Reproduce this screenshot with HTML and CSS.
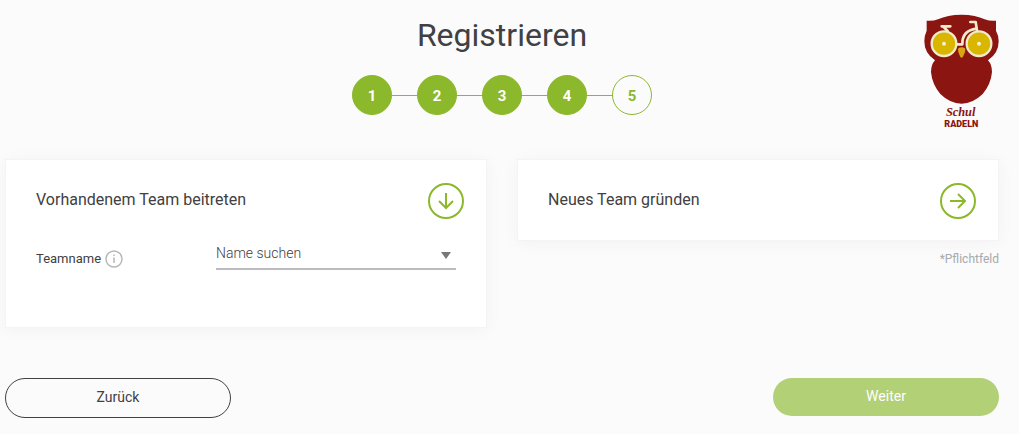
FILE: index.html
```
<!DOCTYPE html>
<html lang="de">
<head>
  <meta charset="UTF-8">
  <meta name="viewport" content="width=device-width, initial-scale=1.0">
  <title>Registrieren</title>
  <link rel="stylesheet" href="styles.css">
</head>
<body>
  <header class="header">
    <div class="intro">
      <h1>Registrieren</h1>
      <ol class="steps">
        <li class="step">1</li>
        <li class="step">2</li>
        <li class="step">3</li>
        <li class="step">4</li>
        <li class="step current" aria-current="step">5</li>
      </ol>
    </div>
    <svg class="logo" viewBox="42 28 225 342" role="img" aria-label="Schulradeln">
      <path fill="#8a1511" d="M50 48 Q68 50 84 44 Q112 30 154 30 Q198 30 224 44 Q240 50 258 48 L258 78 Q266 92 266 110 Q266 146 234 167 Q246 180 246 202 Q243 238 218 268 Q188 297 155 297 Q119 296 91 268 Q66 238 63 202 Q63 180 75 167 Q43 146 43 110 Q43 92 50 78 Z"/>
      <g fill="#d9b600" stroke="#f3eac9" stroke-width="7">
        <circle cx="102" cy="117" r="37"/>
        <circle cx="207" cy="117" r="37"/>
      </g>
      <circle cx="102" cy="117" r="6" fill="#f7efcf"/>
      <circle cx="207" cy="117" r="6" fill="#f7efcf"/>
      <g fill="none" stroke="#f3eac9" stroke-width="8" stroke-linecap="round" stroke-linejoin="round">
        <path d="M95 65 H121 M101 67 L113 79"/>
        <path d="M141 119 H157 Q156 78 199 72"/>
        <path d="M181 52 H197 L201 78"/>
      </g>
      <path fill="#d9a514" d="M146 130 Q155 125 164 130 Q168 136 163 147 Q159 158 155 159 Q150 158 147 147 Q142 136 146 130 Z"/>
      <text class="logo-script" x="152" y="335" text-anchor="middle">Schul</text>
      <text class="logo-name" x="154" y="366" text-anchor="middle">RADELN</text>
    </svg>
  </header>

  <main class="teams">
    <section class="card join">
      <div class="card-head">
        <h2>Vorhandenem Team beitreten</h2>
        <button class="toggle" type="button" aria-label="Vorhandenem Team beitreten">
          <svg viewBox="0 0 36 36"><circle cx="18" cy="18" r="17"/><path d="M18 10v15M11 18l7 7 7-7"/></svg>
        </button>
      </div>
      <div class="field">
        <div class="field-label">
          <label for="team">Teamname</label>
          <svg class="info" viewBox="0 0 18 18"><circle cx="9" cy="9" r="8"/><path d="M9 7.500v5.500M9 4.500v1.500"/></svg>
        </div>
        <div class="select">
          <select id="team">
            <option>Name suchen</option>
          </select>
        </div>
      </div>
    </section>

    <div>
      <section class="card">
        <div class="card-head">
          <h2>Neues Team gründen</h2>
          <button class="toggle" type="button" aria-label="Neues Team gründen">
            <svg viewBox="0 0 36 36"><circle cx="18" cy="18" r="17"/><path d="M10 18h15M18 11l7 7-7 7"/></svg>
          </button>
        </div>
      </section>
      <p class="required">*Pflichtfeld</p>
    </div>
  </main>

  <footer class="actions">
    <button class="btn back" type="button">Zurück</button>
    <button class="btn next" type="button">Weiter</button>
  </footer>
</body>
</html>
```
FILE: styles.css
```
* {
  box-sizing: border-box;
}
body {
  margin: 0;
  padding: 14px 20px 16px 5px;
  background-color: #fbfbfb;
  color: #414042;
  font-family: Roboto, sans-serif;
}
h1, h2, p, ol {
  margin: 0;
  padding: 0;
}
.header {
  display: grid;
  grid-template-columns: 1fr auto 1fr;
  align-items: start;
  margin-bottom: 31px;
}
.intro {
  grid-column: 2;
}
h1 {
  font-size: 32px;
  font-weight: 400;
  line-height: 42px;
  text-align: center;
}
.steps {
  display: flex;
  justify-content: center;
  margin-top: 19px;
  list-style: none;
}
.step {
  display: flex;
  align-items: center;
  justify-content: center;
  width: 40px;
  height: 40px;
  border: 1px solid #8cb82b;
  border-radius: 50%;
  background-color: #8cb82b;
  color: #fff;
  font-size: 15px;
  font-weight: 700;
  line-height: 20px;
  padding-top: 2px;
}
.step + .step {
  position: relative;
  margin-left: 25px;
}
/* line to the previous step */
.step + .step::before {
  content: "";
  position: absolute;
  top: 19px;
  right: 100%;
  width: 26px;
  height: 1px;
  background-color: #8cb82b;
}
.step.current {
  background-color: transparent;
  color: #8cb82b;
}
.logo {
  justify-self: end;
  width: 75px;
  height: 114px;
}
.logo text {
  fill: #8a1511;
  font-weight: 700;
}
.logo-script {
  font-family: "Liberation Serif", serif;
  font-size: 37px;
  font-style: italic;
}
.logo .logo-name {
  font-family: Roboto, sans-serif;
  font-size: 27px;
  font-weight: 900;
}
.teams {
  display: grid;
  grid-template-columns: 1fr 1fr;
  gap: 30px;
  align-items: start;
}
.card {
  padding: 23px 30px 21px;
  border: 1px solid #f4f4f4;
  background-color: #fff;
  box-shadow: 0 2px 16px rgba(0, 0, 0, 0.04);
}
.card.join {
  padding-bottom: 57px;
}
.card-head {
  display: flex;
  justify-content: space-between;
  margin-right: -8px;
}
h2 {
  font-size: 16px;
  font-weight: 400;
  line-height: 34px;
}
.toggle {
  width: 36px;
  height: 36px;
  padding: 0;
  border: none;
  background: none;
  cursor: pointer;
}
.toggle svg {
  display: block;
  fill: none;
  stroke: #8cb82b;
  stroke-width: 2;
}
.field {
  display: flex;
  align-items: flex-end;
  margin-top: 17px;
}
.field-label {
  display: flex;
  align-items: center;
  gap: 4px;
  width: 180px;
  font-size: 13px;
  line-height: 22px;
}
.info {
  width: 18px;
  height: 18px;
  fill: none;
  stroke: #b7b7b7;
  stroke-width: 1.5;
}
.select {
  position: relative;
  flex: 1;
}
.select::after {
  content: "";
  position: absolute;
  top: 16px;
  right: 5px;
  border: 5px solid transparent;
  border-top: 7px solid #77787b;
  border-bottom: none;
  pointer-events: none;
}
select {
  display: block;
  width: 100%;
  height: 34px;
  padding: 2px 0 0;
  appearance: none;
  border: none;
  border-bottom: 2px solid #bcbcc0;
  border-radius: 0;
  background: none;
  color: #414042;
  font-family: inherit;
  font-size: 14px;
  font-weight: 300;
}
.required {
  margin-top: 8px;
  color: #a7a9ac;
  font-size: 12px;
  line-height: 20px;
  text-align: right;
}
.actions {
  display: flex;
  justify-content: space-between;
  align-items: flex-start;
  margin-top: 50px;
}
.btn {
  width: 226px;
  height: 38px;
  padding: 0 0 2px;
  border: none;
  border-radius: 20px;
  font-family: inherit;
  font-size: 14px;
  cursor: pointer;
}
.back {
  height: 40px;
  border: 1px solid #414042;
  background: none;
  color: #414042;
}
.next {
  background-color: #b2d076;
  color: #fff;
}
```
